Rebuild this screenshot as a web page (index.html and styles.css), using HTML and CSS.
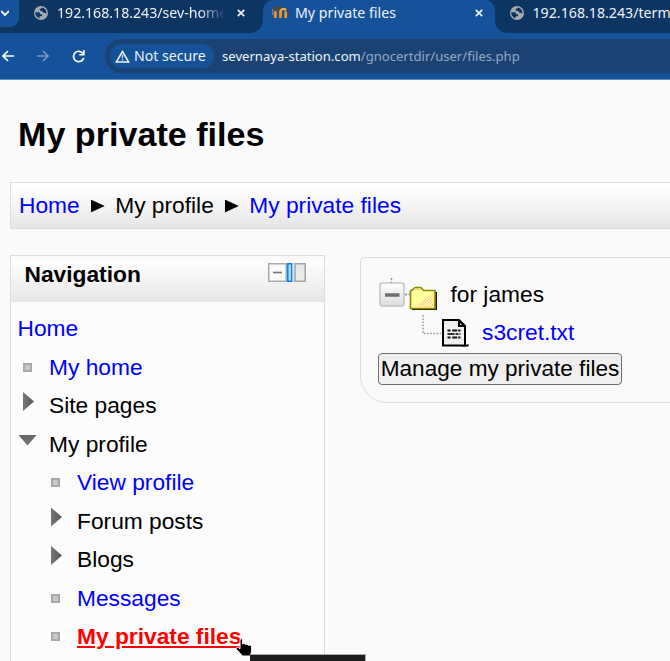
FILE: index.html
```html
<!DOCTYPE html>
<html lang="en">
<head>
<meta charset="utf-8">
<title>My private files</title>
<link rel="stylesheet" href="styles.css">
</head>
<body>
<svg class="defs" width="0" height="0">
  <symbol id="globe" viewBox="0 0 14 14"><circle cx="7" cy="7" r="7" fill="#a6a9ad"/><path d="M1.2 6.2h3.3c1.4 0 2 .9 1.5 2h2v2H5.6v2.1C2.9 11.500 1 9.100 1.200 6.200z M8 1.600c-.3 1.300-1.500.9-2.200 1.600-.6.7.1 1.500 1.100 1.600 1.500 0 1.700 1.700 2.900 1.900.900.100 1.100.700 2.700.600C12.700 4.500 10.800 2.200 8 1.600z" fill="#0c3562"/></symbol>
  <symbol id="close" viewBox="0 0 8 8"><path d="M.8.8l6.400 6.400M7.200.8L.8 7.200" stroke="#eef3fa" stroke-width="1.700"/></symbol>
</svg>
<header class="browser">
  <div class="tabs">
    <div class="tab-search"><svg width="8" height="6" viewBox="0 0 8 6"><path d="M0 1l4 4 4-4" fill="none" stroke="#fff" stroke-width="1.900"/></svg></div>
    <div class="tab first"><svg class="globe" width="14" height="14"><use href="#globe"/></svg><span class="tab-title fade">192.168.18.243/sev-home</span><svg class="close" width="8" height="8"><use href="#close"/></svg></div>
    <div class="tab active"><svg class="moodle" width="16" height="14" viewBox="0 0 16 14"><path d="M3.300 12V5M8.500 12V5M13.700 12V5.500" stroke="#f59a16" stroke-width="2.700"/><path d="M3 4.500Q6 1.500 8.500 4.500Q12 1.200 14 4.500" fill="none" stroke="#ffad22" stroke-width="2.400"/><path d="M0 2.500L4 0l5.500.8L8 4.200l-5 1.300z" fill="#4c4a45"/><path d="M.7 3v6" stroke="#999" stroke-width=".8"/></svg><span class="tab-title">My private files</span><svg class="close" width="8" height="8"><use href="#close"/></svg></div>
    <div class="tab last"><svg class="globe" width="14" height="14"><use href="#globe"/></svg><span class="tab-title">192.168.18.243/term</span></div>
  </div>
  <div class="toolbar">
    <svg class="back" width="13" height="12" viewBox="0 0 13 12"><path d="M13 6H2M7 1L2 6l5 5" fill="none" stroke="#fff" stroke-width="1.700"/></svg>
    <svg class="forward" width="13" height="12" viewBox="0 0 13 12"><path d="M0 6h11M6 1l5 5-5 5" fill="none" stroke="#7397c6" stroke-width="1.700"/></svg>
    <svg class="reload" width="13" height="13" viewBox="0 0 13 13"><path d="M11 3.500A5.200 5.200 0 1 0 11.700 8" fill="none" stroke="#fff" stroke-width="1.700"/><path d="M12.700 0v5.500H7.300V4h3.900V0z" fill="#fff"/></svg>
    <div class="omnibox">
      <div class="security"><svg width="15" height="13" viewBox="0 0 15 13"><path d="M7.500 1.500L1.300 12h12.400z" fill="none" stroke="#eef3fa" stroke-width="1.500"/><path d="M7.500 4.800v3.400M7.500 9v1.500" stroke="#c4d4e9" stroke-width="1.500"/></svg><span>Not secure</span></div>
      <div class="url">severnaya-station.com<span>/gnocertdir/user/files.php</span></div>
    </div>
  </div>
</header>
<main>
  <h1>My private files</h1>
  <nav class="crumbs"><a>Home</a><i></i><span>My profile</span><i></i><a>My private files</a></nav>
  <div class="columns">
    <aside class="block">
      <div class="block-head"><h2>Navigation</h2>
        <svg width="38" height="19" viewBox="0 0 38 19"><path d="M.75.750h17.500v17.500H.75z" fill="#fafafa" stroke="#aaa" stroke-width="1.500"/><path d="M5 9.500h9" stroke="#777" stroke-width="1.600"/><path d="M19.800.800h3.900v17.400h-3.900z" fill="#bfe2ff" stroke="#0784f5" stroke-width="1.600"/><path d="M25 0v19" stroke="#b8cfe2"/><path d="M27 .75h10.250v17.500H27z" fill="#e9e9e9" stroke="#a2a2a2" stroke-width="1.500"/></svg>
      </div>
      <ul class="tree">
        <li class="root"><a>Home</a></li>
        <li><b class="leaf"></b><a>My home</a></li>
        <li><b class="closed"></b><span>Site pages</span></li>
        <li><b class="open"></b><span>My profile</span></li>
        <li class="sub"><b class="leaf"></b><a>View profile</a></li>
        <li class="sub"><b class="closed"></b><span>Forum posts</span></li>
        <li class="sub"><b class="closed"></b><span>Blogs</span></li>
        <li class="sub"><b class="leaf"></b><a>Messages</a></li>
        <li class="sub"><b class="leaf"></b><a class="current">My private files</a></li>
      </ul>
    </aside>
    <section class="files">
      <div class="file-row folder">
        <svg width="60" height="35" viewBox="0 0 60 35">
          <defs><linearGradient id="box" x2="0" y2="1"><stop stop-color="#fff"/><stop offset="1" stop-color="#dcdcdc"/></linearGradient><pattern id="dither" width="3" height="3" patternUnits="userSpaceOnUse"><path d="M0 3l3-3" stroke="#ffc9a0" stroke-width="1.100"/></pattern></defs>
          <path d="M12.500 1v6" stroke="#888" stroke-width="1.500" stroke-dasharray="1.700 1.700"/>
          <rect x="1" y="6" width="24" height="23" rx="2" fill="url(#box)" stroke="#c2c2c2" stroke-width="1.500"/>
          <path d="M6 18h14.500" stroke="#707070" stroke-width="3.500"/>
          <path d="M26 17.500h6" stroke="#6f8aa8" stroke-width="1.500" stroke-dasharray="2 1.700"/>
          <path d="M33 15h25v18H33z" fill="#171700"/>
          <path d="M31.500 14l2.500-1.500 2-2h6l2.500 3h11.500v18H31.500z" fill="#ffff9b" stroke="#8d8900" stroke-width="1.600"/>
          <path d="M35 12h7" stroke="#d6d66a" stroke-width="1.500"/><path d="M35 30.500L55 15v15.500z" fill="url(#dither)"/>
        </svg><span>for james</span>
      </div>
      <div class="file-row child">
        <svg width="49" height="34" viewBox="0 0 49 34">
          <path d="M3 0v18.500h18" fill="none" stroke="#999" stroke-width="1.400" stroke-dasharray="1.700 1.500"/>
          <path d="M23 5h16l6 6v19.500H23z" fill="#efefef" stroke="#000" stroke-width="2"/>
          <path d="M38 4l8 8h-8zM41 31.500l7.500-2.500v2.500z"/><path d="M40 8l2 2h-2z" fill="#eee"/>
          <path d="M27.500 15.500h13M27.500 22.500h13" stroke="#111" stroke-width="2" stroke-dasharray="3 1.700 5 1"/><path d="M27.500 19h13" stroke="#333" stroke-width="2" stroke-dasharray="7 1 3 1"/>
        </svg><a>s3cret.txt</a>
      </div>
      <button>Manage my private files</button>
    </section>
  </div>
</main>
<svg class="cursor" width="20" height="22" viewBox="0 0 20 22"><path d="M5 2c0-1.800 2.600-1.800 2.600 0v4c1-.8 2.400-.5 2.800.5 1-.7 2.400-.4 2.700.8 1-.6 3.500 0 3.500 1.300V14L15 18H7.500L1.500 11.500c-1-1.500.8-3 2-1.800l1.500 1z" fill="#000" stroke="#fff" stroke-width="1"/></svg>
<div class="tooltip"></div>
</body>
</html>
```

FILE: styles.css
```css
* { box-sizing: border-box; }
body { margin: 0; width: 670px; height: 661px; overflow: hidden; background: #fafafa; color: #000; font: 22.75px "Liberation Sans", Arial, sans-serif; }
svg { display: block; flex: none; }
.defs { position: absolute; }
a { color: #00f; }

.browser { height: 80px; background: #15529a; border-bottom: 1px solid #5d8fc9; font-family: "Noto Sans", sans-serif; color: #edf3fa; overflow: hidden; }
.tabs { display: flex; height: 33px; background: #0c3562; }
.tab-search { width: 19px; height: 27px; padding: 10px 0 0 1px; background: #15529a; border-radius: 0 0 9px 0; }
.tab { display: flex; height: 33px; padding-top: 6px; font-size: 14.2px; line-height: 13px; white-space: nowrap; }
.first { width: 244px; padding-left: 15px; }
.last { width: 175px; padding-left: 15px; }
.tab-title { margin-left: 9px; flex: none; }
.last .tab-title { margin-left: 8.500px; }
.fade { width: 167px; overflow: hidden; height: 22px; margin-top: -4px; line-height: 21px; letter-spacing: -.03px; -webkit-mask-image: linear-gradient(90deg, #000 142px, transparent 168px); mask-image: linear-gradient(90deg, #000 142px, transparent 168px); }
.close { margin-top: 3px; }
.first .close { margin-left: 13px; }
.active { position: relative; width: 232px; padding-left: 9px; background: #15529a; border-radius: 10px 10px 0 0; }
.active::before, .active::after { content: ""; position: absolute; bottom: 0; width: 12px; height: 12px; }
.active::before { left: -12px; background: radial-gradient(circle at 0 0, transparent 11.5px, #15529a 12px); }
.active::after { right: -12px; background: radial-gradient(circle at 100% 0, transparent 11.5px, #15529a 12px); }
.active .tab-title { margin-left: 7px; width: 180px; }

.toolbar { display: flex; align-items: center; height: 46px; padding-left: 1px; }
.forward { margin-left: 23px; }
.reload { margin-left: 22px; }
.omnibox { display: flex; align-items: center; flex: 1; min-width: 0; height: 34px; margin-left: 20px; padding-left: 5px; border-radius: 17px 0 0 17px; background: #1a4374; }
.security { display: flex; align-items: center; width: 104px; height: 24px; padding-left: 5px; border-radius: 12px; background: #15529a; font-size: 14.1px; line-height: 22px; white-space: nowrap; }
.security span { margin: -1px 0 0 4px; }
.url { margin-left: 8px; font-size: 13.090px; white-space: nowrap; }
.url span { color: #94a8c2; }

main { padding-left: 10px; }
h1 { margin: 0; padding: 34px 0 0 8px; height: 102px; font-size: 34.125px; line-height: 40px; }
.crumbs { display: flex; align-items: center; height: 47px; padding-left: 8px; border: 1px solid #ddd; border-right: 0; background: linear-gradient(#fff 10%, #e6e6e6); white-space: nowrap; }
.crumbs i { width: 14px; height: 13px; margin: 1px 10.500px 0 11px; background: #000; clip-path: polygon(0 0, 100% 50%, 0 100%); }
.columns { display: flex; align-items: flex-start; padding-top: 26px; height: 432px; }
.block { flex: none; width: 315px; height: 406px; border: 1px solid #ddd; border-bottom: 0; background: #fcfcfc; }
.block-head { display: flex; justify-content: space-between; height: 46px; padding: 7px 18px 0 13.500px; background: linear-gradient(#fafafa 0 4px, #fff 4px, #e6e6e6); }
h2 { margin: -1px 0 0; font-size: 22.75px; line-height: 24px; }
.tree { list-style: none; margin: 0; padding: 7px 0 0 7px; }
.tree li { display: flex; height: 38.5px; line-height: 38.500px; white-space: nowrap; }
.tree .root { text-indent: -.5px; }
.tree .sub { padding-left: 28px; }
.tree b { flex: none; }
.leaf { width: 9px; height: 9px; margin: 15px 17px 0 5px; border: 2px solid #a8a8a8; background: #c8c8c8; }
.closed { width: 11px; height: 19px; margin: 6px 15px 0 5px; background: linear-gradient(90deg, #777, #555); clip-path: polygon(0 0, 100% 50%, 0 100%); }
.open { width: 19px; height: 11px; margin: 10px 12px 0 0; background: linear-gradient(#666, #777); clip-path: polygon(0 0, 100% 0, 50% 100%); }
.current { color: #f00; font-weight: bold; text-decoration: underline; }
.files { flex: 1; min-width: 0; height: 146px; margin: 2px 0 0 35px; padding: 19px 0 0 17px; border: 1px solid #ddd; border-right: 0; border-radius: 5px 0 0 27px; }
.file-row { display: flex; height: 38px; line-height: 34px; }
.folder { padding-left: 1px; }
.folder span { margin-left: 11.500px; }
.child { padding-left: 42px; }
.child a { margin-left: 13px; }
button { display: block; width: 244px; height: 32px; margin: 0; padding: 0 0 1px; font: inherit; font-size: 22.6px; line-height: 29px; border: 1px solid #707070; border-radius: 4px; background: #efefef; color: #000; white-space: nowrap; }
.cursor { position: absolute; left: 235px; top: 638px; }
.tooltip { position: absolute; left: 250px; top: 654px; width: 116px; height: 7px; border: 1px solid #aaa; border-width: 1px 1px 0 0; background: #1c1c1c; }
```
